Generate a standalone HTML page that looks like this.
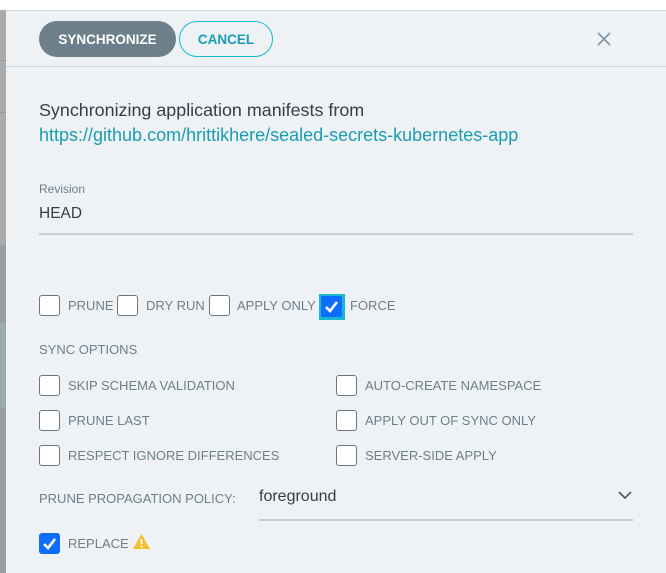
<!DOCTYPE html>
<html><head><meta charset="utf-8"><style>
*{box-sizing:border-box;margin:0;padding:0}
body{width:666px;height:573px;overflow:hidden;background:#fff;font-family:"Liberation Sans",sans-serif;position:relative}
.strip{position:absolute;left:0;width:6px}
.panel{position:absolute;left:6px;top:10px;right:0;bottom:0;background:#eef2f5;border-top:1px solid #d6dbe0}
.hdr{position:absolute;left:0;right:0;top:0;height:56px;border-bottom:1px solid #d0d5da}
.btn{position:absolute;top:10px;height:36px;border-radius:18px;font-size:13.5px;font-weight:bold;display:flex;align-items:center;justify-content:center}
.t{position:absolute;font-size:13px;color:#6d7f8b;white-space:nowrap}
.cb{position:absolute;width:21px;height:21px;border:1.5px solid #6d7680;border-radius:3px;background:#fff}
.cbk{position:absolute;width:21px;height:21px;border-radius:3px;background:#0d6efd}
</style></head><body>
<div class="strip" style="top:10px;height:235px;background:#aaa"></div>
<div class="strip" style="top:60px;height:1px;background:#999"></div>
<div class="strip" style="top:112px;height:1px;background:#999"></div>
<div class="strip" style="top:245px;height:78px;background:#999ea2"></div>
<div class="strip" style="top:323px;height:85px;background:#9aacae"></div>
<div class="strip" style="top:408px;height:165px;background:#9a9ea2"></div>
<div class="panel">
 <div class="hdr">
  <div class="btn" style="left:33px;width:137px;background:#6d7f8b;color:#fff">SYNCHRONIZE</div>
  <div class="btn" style="left:173px;width:94px;border:1.5px solid #17b9d0;color:#1a9db2;background:#eef2f5">CANCEL</div>
  <svg style="position:absolute;left:590px;top:20px" width="16" height="16" viewBox="0 0 16 16"><path d="M2 2L14 14M14 2L2 14" stroke="#7f95a6" stroke-width="1.6"/></svg>
 </div>
 <div class="t" style="left:33px;top:89px;font-size:17.9px;color:#363c4a">Synchronizing application manifests from</div>
 <div class="t" style="left:33px;top:114px;font-size:18px;color:#1a9db2">https://github.com/hrittikhere/sealed-secrets-kubernetes-app</div>
 <div class="t" style="left:33px;top:171px;font-size:12px;color:#6d7f8b">Revision</div>
 <div class="t" style="left:33px;top:194px;font-size:15.5px;color:#363c4a">HEAD</div>
 <div style="position:absolute;left:33px;top:222px;width:594px;height:2px;background:#ccc"></div>

 <div class="cb" style="left:33px;top:284px"></div><div class="t" style="left:62px;top:287px">PRUNE</div>
 <div class="cb" style="left:111px;top:284px"></div><div class="t" style="left:140px;top:287px">DRY RUN</div>
 <div class="cb" style="left:203px;top:284px"></div><div class="t" style="left:231px;top:287px">APPLY ONLY</div>
 <div style="position:absolute;left:313px;top:283px;width:26px;height:26px;background:#17b9d0"></div>
 <div class="cbk" style="left:315px;top:285px;border-radius:1px"><svg width="21" height="21" viewBox="0 0 21 21"><path d="M5 11l4 4 7-9" stroke="#fff" stroke-width="2.6" fill="none"/></svg></div>
 <div class="t" style="left:344px;top:287px">FORCE</div>

 <div class="t" style="left:33px;top:331px;font-size:13px">SYNC OPTIONS</div>
 <div class="cb" style="left:33px;top:364px"></div><div class="t" style="left:62px;top:367px">SKIP SCHEMA VALIDATION</div>
 <div class="cb" style="left:330px;top:364px"></div><div class="t" style="left:359px;top:367px">AUTO-CREATE NAMESPACE</div>
 <div class="cb" style="left:33px;top:399px"></div><div class="t" style="left:62px;top:402px">PRUNE LAST</div>
 <div class="cb" style="left:330px;top:399px"></div><div class="t" style="left:359px;top:402px">APPLY OUT OF SYNC ONLY</div>
 <div class="cb" style="left:33px;top:434px"></div><div class="t" style="left:62px;top:437px">RESPECT IGNORE DIFFERENCES</div>
 <div class="cb" style="left:330px;top:434px"></div><div class="t" style="left:359px;top:437px">SERVER-SIDE APPLY</div>

 <div class="t" style="left:33px;top:480px;font-size:13px">PRUNE PROPAGATION POLICY:</div>
 <div class="t" style="left:253px;top:477px;font-size:16px;color:#363c4a">foreground</div>
 <svg style="position:absolute;left:612px;top:480px" width="14" height="9" viewBox="0 0 14 9"><path d="M1 1l6 6 6-6" stroke="#444" stroke-width="1.5" fill="none"/></svg>
 <div style="position:absolute;left:253px;top:508px;width:374px;height:2px;background:#ccc"></div>

 <div class="cbk" style="left:33px;top:522px"><svg width="21" height="21" viewBox="0 0 21 21"><path d="M5 11l4 4 7-9" stroke="#fff" stroke-width="2.6" fill="none"/></svg></div>
 <div class="t" style="left:62px;top:525px">REPLACE</div>
 <svg style="position:absolute;left:126px;top:522px" width="19" height="17" viewBox="0 0 19 17"><path d="M9.5 1L18 16H1z" fill="#f4c030"/><path d="M9.5 6v5M9.5 12.5v2" stroke="#fff" stroke-width="1.8"/></svg>
</div>
</body></html>
